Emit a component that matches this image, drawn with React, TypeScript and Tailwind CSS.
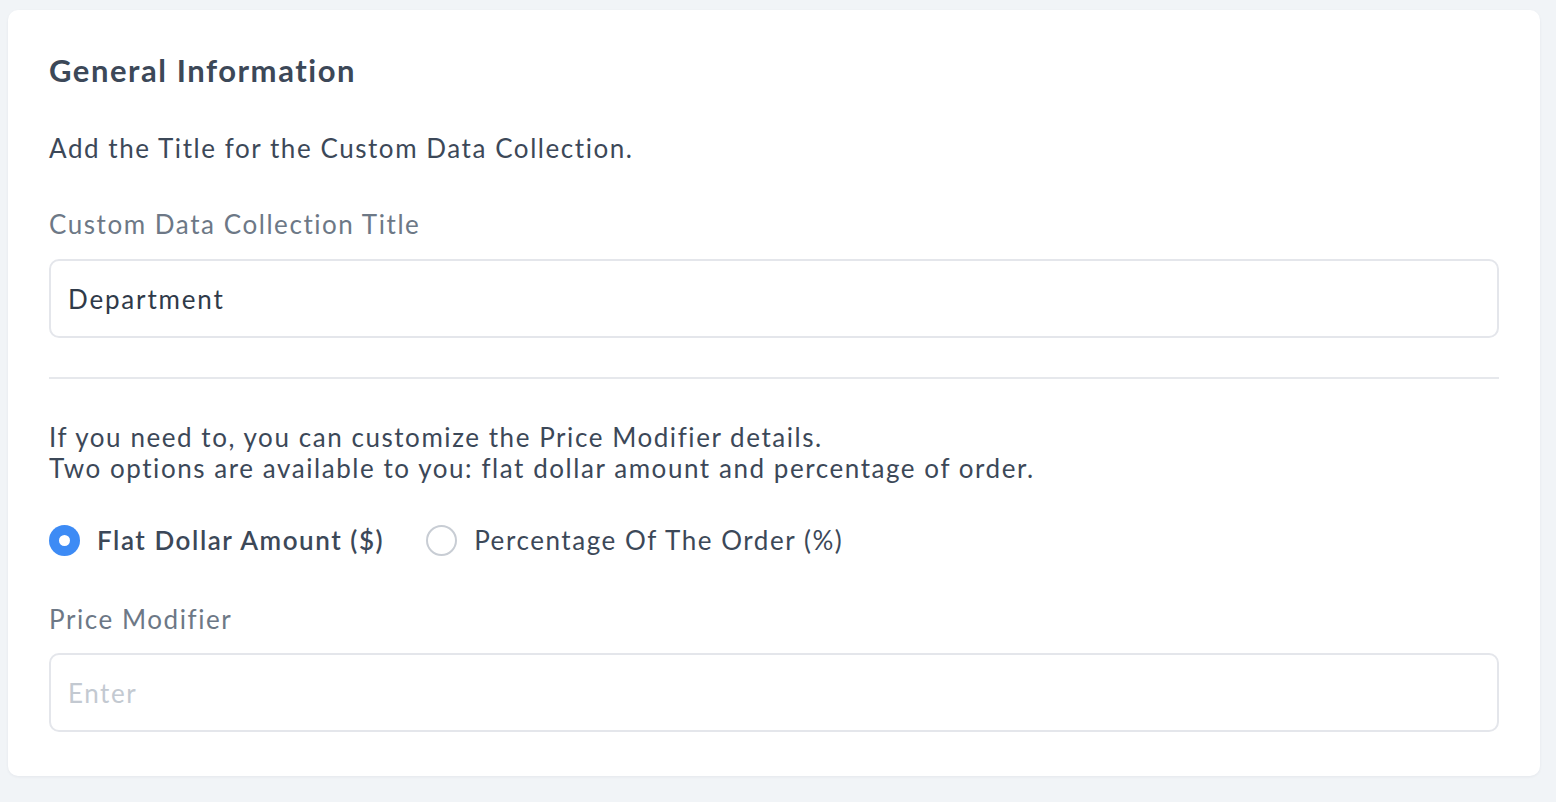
import { useState } from 'react';

function Radio({ checked, label, onClick }: { checked: boolean; label: string; onClick: () => void }) {
  return (
    <button type="button" onClick={onClick} className="flex items-center gap-[17px]">
      {checked ? (
        <span className="w-[31px] h-[31px] rounded-full bg-[#3d8bf5] flex items-center justify-center">
          <span className="w-[11px] h-[11px] rounded-full bg-white" />
        </span>
      ) : (
        <span className="w-[31px] h-[31px] rounded-full border-2 border-[#c8cdd4] bg-white" />
      )}
      <span className={`text-[26px] leading-[32px] tracking-[0.06em] text-[#3c4858] ${checked ? 'font-semibold' : ''}`}>
        {label}
      </span>
    </button>
  );
}

export default function App() {
  const [mode, setMode] = useState<'flat' | 'percent'>('flat');
  const [title, setTitle] = useState('Department');

  return (
    <div className="min-h-screen bg-[#f1f4f7] pt-[10px] pl-[8px] pr-[16px] pb-[26px]" style={{ fontFamily: 'Lato, "Open Sans", sans-serif' }}>
      <div className="bg-white rounded-[10px] shadow-[0_1px_3px_rgba(30,40,60,0.06)] px-[41px] pt-[40px] pb-[44px]">
        <h2 className="text-[31px] leading-[40px] font-bold tracking-[0.05em] text-[#3c4858]">General Information</h2>

        <p className="mt-[43px] text-[26px] leading-[31px] tracking-[0.06em] text-[#3c4858]">Add the Title for the Custom Data Collection.</p>

        <label className="block mt-[45px] text-[26px] leading-[31px] tracking-[0.06em] text-[#6d7886]">Custom Data Collection Title</label>
        <input
          value={title}
          onChange={e => setTitle(e.target.value)}
          className="mt-[19px] block w-full h-[79px] rounded-[10px] border-2 border-[#e4e6eb] px-[17px] text-[26px] tracking-[0.07em] text-[#2f3a49] outline-none"
        />

        <div className="mt-[39px] h-[2px] bg-[#e6e8ec]" />

        <p className="mt-[43px] text-[26px] leading-[31px] tracking-[0.06em] text-[#3c4858]">
          If you need to, you can customize the Price Modifier details.
          <br />
          Two options are available to you: flat dollar amount and percentage of order.
        </p>

        <div className="mt-[40px] flex items-center gap-[42px]">
          <Radio checked={mode === 'flat'} label="Flat Dollar Amount ($)" onClick={() => setMode('flat')} />
          <Radio checked={mode === 'percent'} label="Percentage Of The Order (%)" onClick={() => setMode('percent')} />
        </div>

        <label className="block mt-[48px] text-[26px] leading-[31px] tracking-[0.06em] text-[#6d7886]">Price Modifier</label>
        <input
          placeholder="Enter"
          className="mt-[18px] block w-full h-[79px] rounded-[10px] border-2 border-[#e4e6eb] px-[17px] text-[26px] tracking-[0.06em] text-[#2f3a49] placeholder:text-[#c3c9d1] outline-none"
        />
      </div>
    </div>
  );
}
